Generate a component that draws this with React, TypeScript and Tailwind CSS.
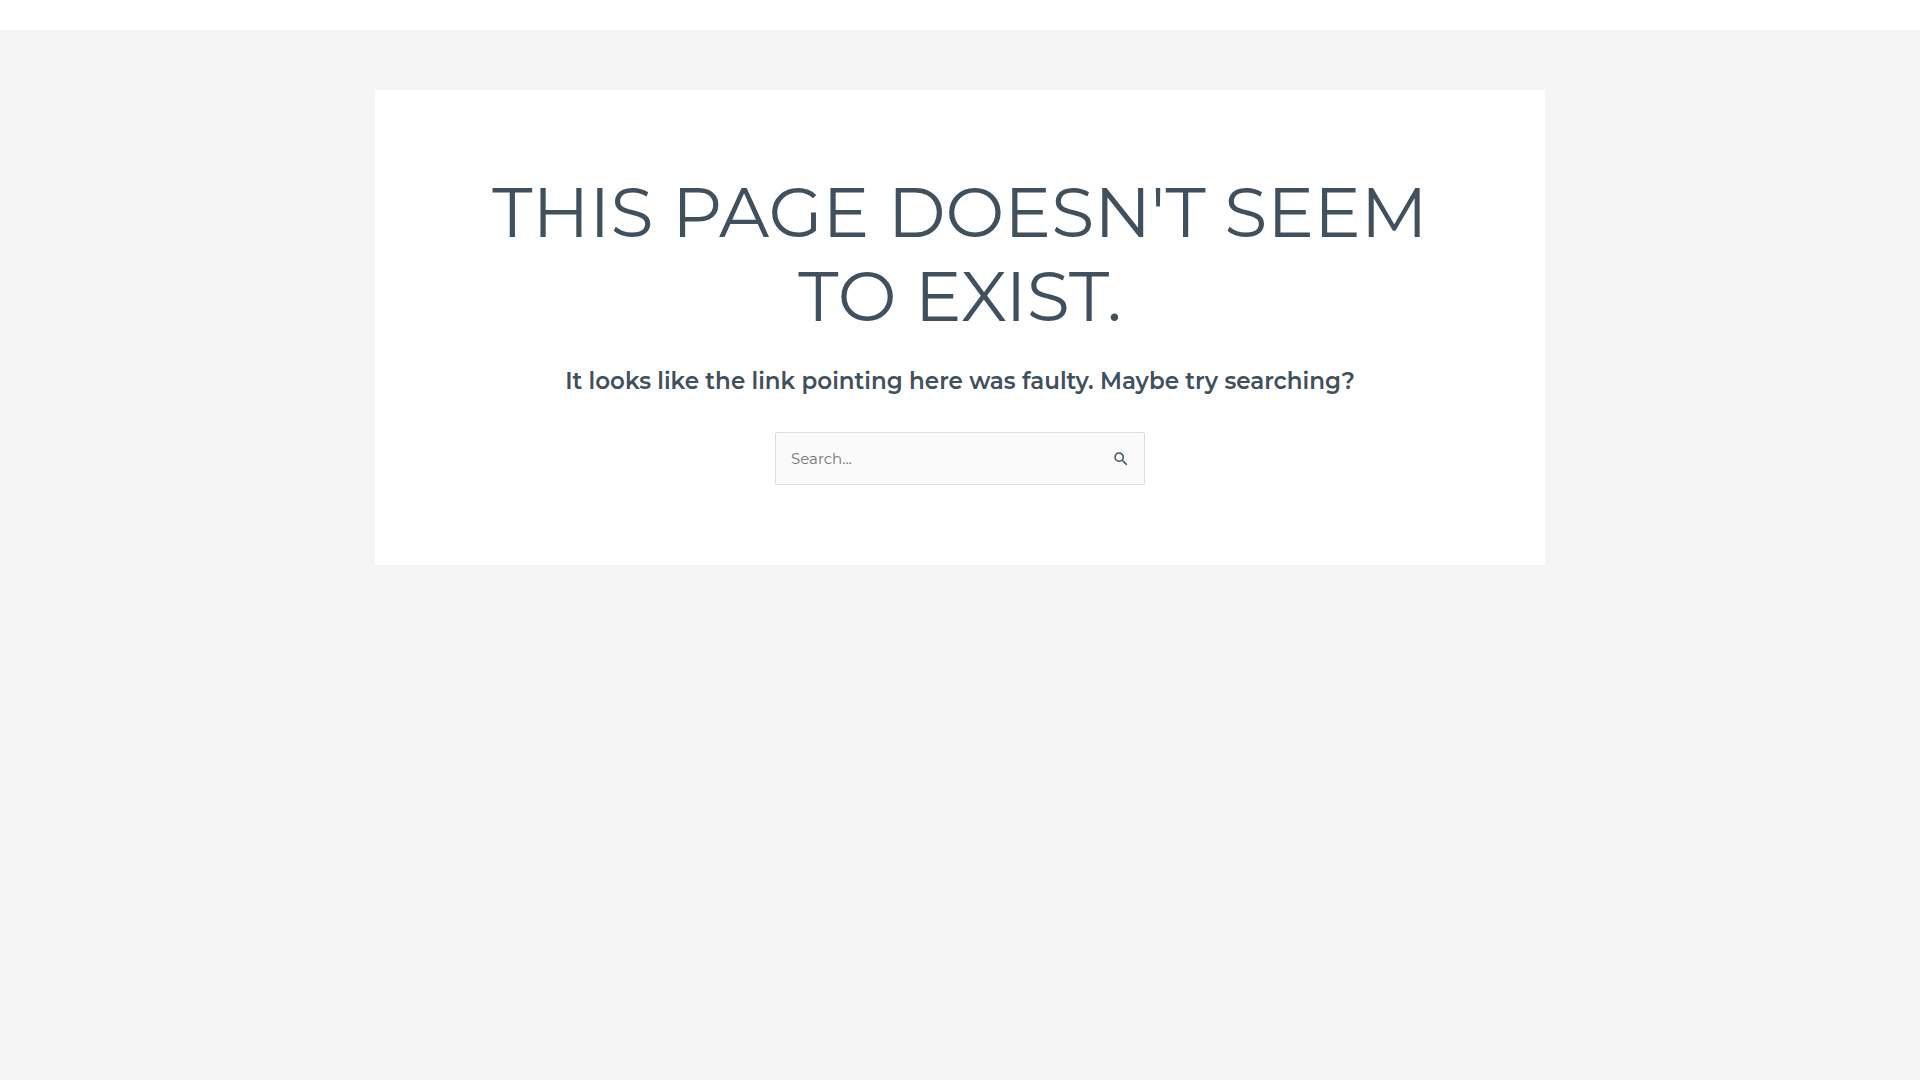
export default function App() {
  return (
    <div className="min-h-screen bg-[#f5f5f5] font-['Montserrat','Inter','Liberation_Sans',sans-serif] text-[#40505d]">
      <header className="h-[30px] bg-white" />
      <main className="mx-auto mt-[60px] w-full max-w-[1170px] bg-white px-5 py-20 text-center">
        <h1 className="mx-auto max-w-[1000px] text-[70px] leading-[84px] font-normal uppercase">
          This page doesn't seem to exist.
        </h1>
        <p className="mt-6 text-[23px] leading-[38px] font-semibold">
          It looks like the link pointing here was faulty. Maybe try searching?
        </p>
        <form className="mx-auto mt-8 flex h-[53px] w-full max-w-[370px] items-center rounded-xs border border-[#dddddd] bg-[#fafafa]">
          <input
            type="search"
            aria-label="Search"
            placeholder="Search..."
            className="h-full min-w-0 flex-1 bg-transparent px-[15px] text-[15px] outline-none placeholder:text-[#757575]"
          />
          <button type="button" aria-label="Search" className="flex h-full w-[46px] items-center justify-center">
            <svg viewBox="0 0 24 24" className="size-[18px]" fill="currentColor" aria-hidden="true">
              <path d="M15.5 14h-.79l-.28-.27A6.47 6.47 0 0 0 16 9.5 6.5 6.5 0 1 0 9.5 16c1.61 0 3.09-.59 4.23-1.57l.27.28v.79l5 4.99L20.49 19zM9.5 14C7.01 14 5 11.99 5 9.5S7.01 5 9.5 5 14 7.01 14 9.5 11.99 14 9.5 14z" />
            </svg>
          </button>
        </form>
      </main>
    </div>
  )
}
